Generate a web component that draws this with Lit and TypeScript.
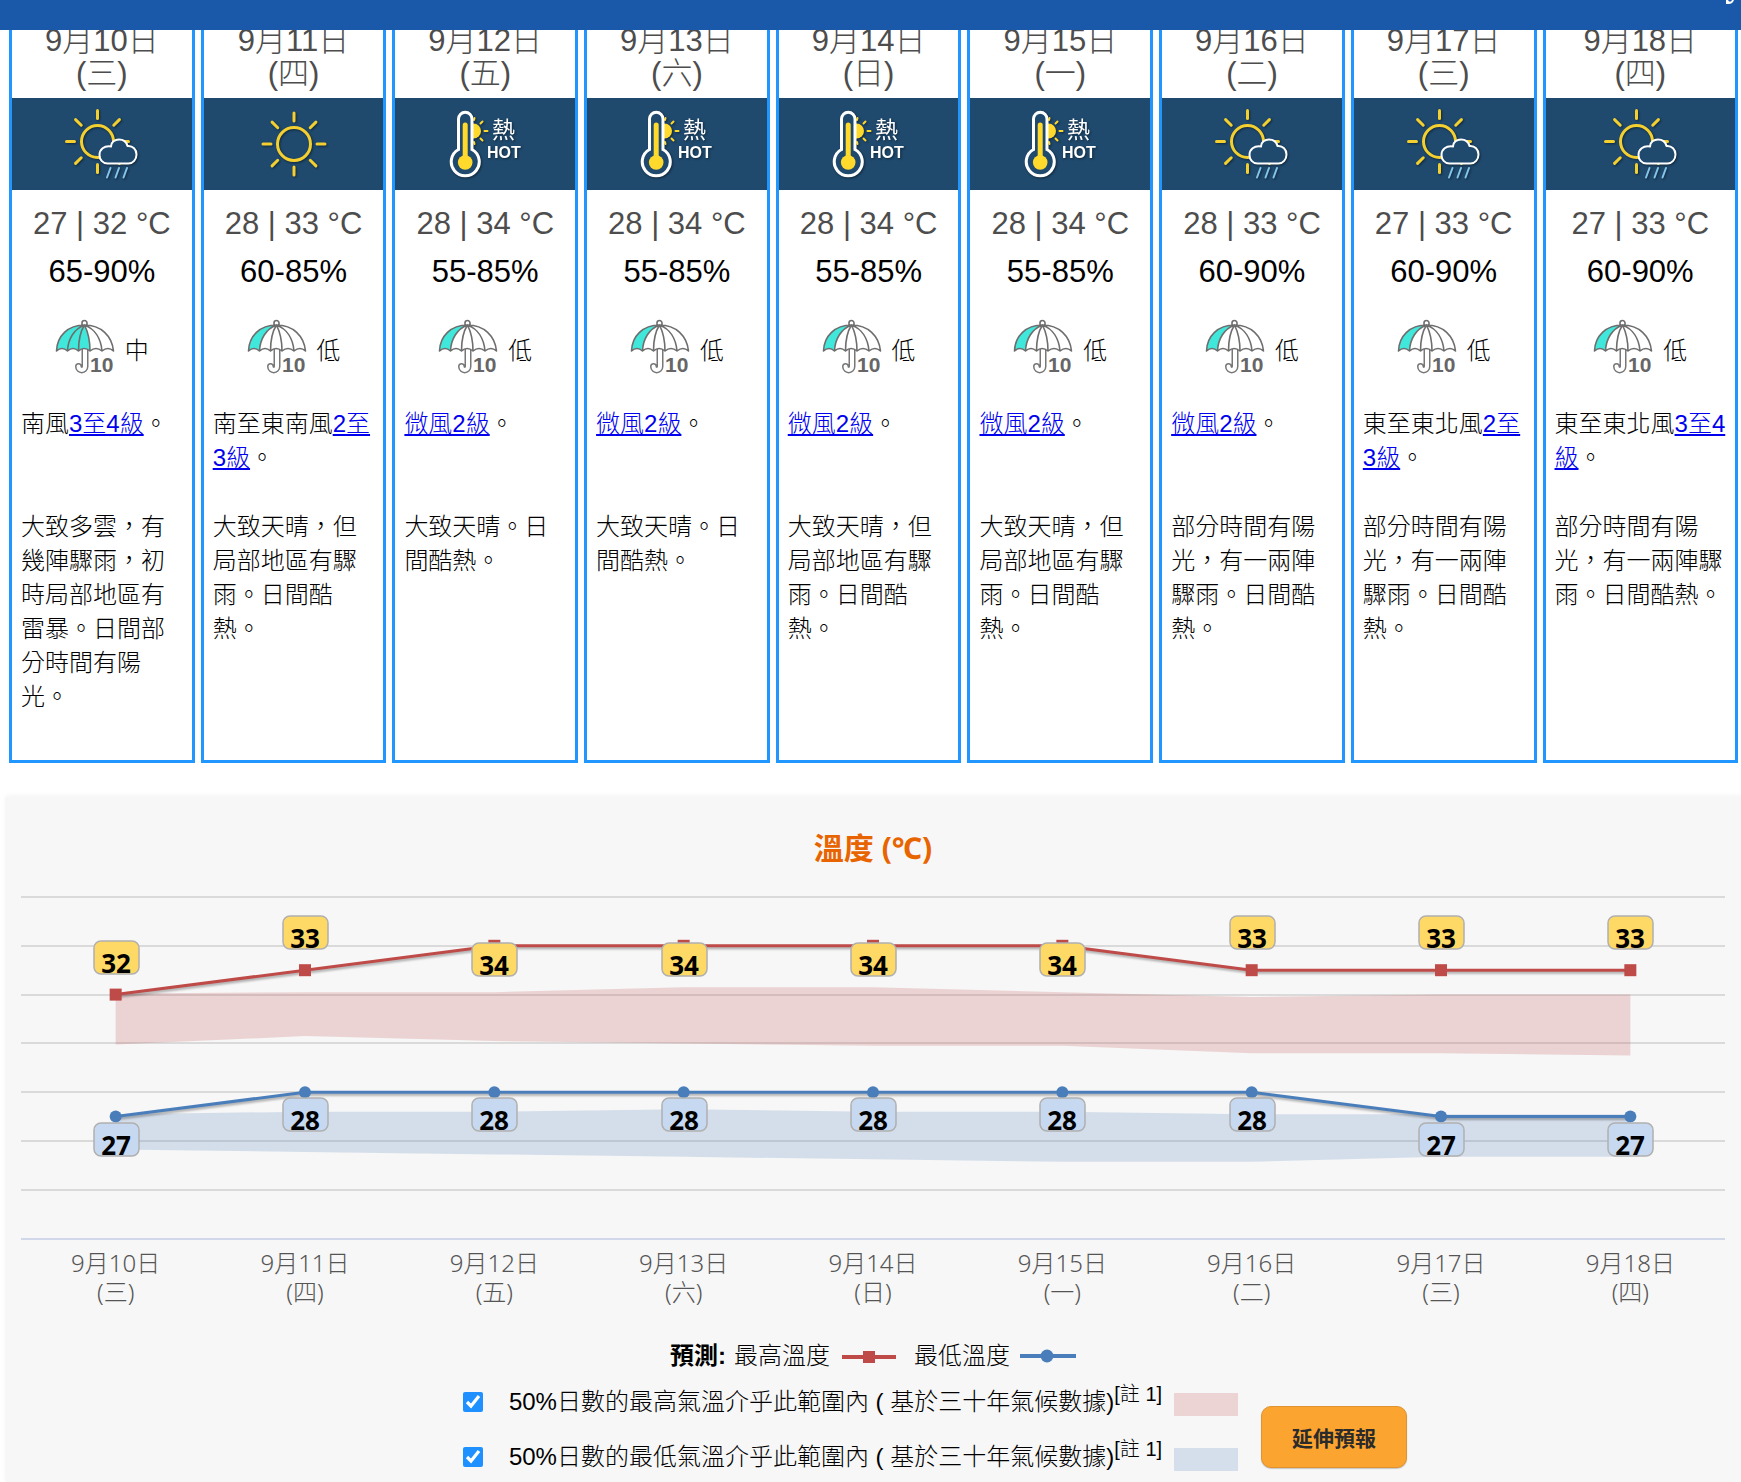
import { LitElement, html, svg, css } from "lit";
import { customElement, property, state } from "lit/decorators.js";

type Sky = "sun-rain" | "sunny" | "hot";
type LabelSpot = "above" | "over" | "below";

interface Day {
  date: string;
  weekday: string;
  sky: Sky;
  min: number;
  max: number;
  humidity: string;
  rain: "低" | "中";
  wind: string;
  force: string;
  text: string;
  maxRange: [number, number];
  minRange: [number, number];
}

const DAYS: Day[] = [
  { date: "9月10日", weekday: "(三)", sky: "sun-rain", min: 27, max: 32, humidity: "65-90%", rain: "中", wind: "南風", force: "3至4級", text: "大致多雲，有幾陣驟雨，初時局部地區有雷暴。日間部分時間有陽光。", maxRange: [29.95, 32.05], minRange: [25.65, 27.1] },
  { date: "9月11日", weekday: "(四)", sky: "sunny", min: 28, max: 33, humidity: "60-85%", rain: "低", wind: "南至東南風", force: "2至3級", text: "大致天晴，但局部地區有驟雨。日間酷熱。", maxRange: [30.3, 32.1], minRange: [25.55, 27.2] },
  { date: "9月12日", weekday: "(五)", sky: "hot", min: 28, max: 34, humidity: "55-85%", rain: "低", wind: "", force: "微風2級", text: "大致天晴。日間酷熱。", maxRange: [30.1, 32.1], minRange: [25.45, 27.2] },
  { date: "9月13日", weekday: "(六)", sky: "hot", min: 28, max: 34, humidity: "55-85%", rain: "低", wind: "", force: "微風2級", text: "大致天晴。日間酷熱。", maxRange: [30, 32.3], minRange: [25.35, 27.3] },
  { date: "9月14日", weekday: "(日)", sky: "hot", min: 28, max: 34, humidity: "55-85%", rain: "低", wind: "", force: "微風2級", text: "大致天晴，但局部地區有驟雨。日間酷熱。", maxRange: [29.9, 32.3], minRange: [25.25, 27.2] },
  { date: "9月15日", weekday: "(一)", sky: "hot", min: 28, max: 34, humidity: "55-85%", rain: "低", wind: "", force: "微風2級", text: "大致天晴，但局部地區有驟雨。日間酷熱。", maxRange: [29.9, 32.1], minRange: [25.15, 27.2] },
  { date: "9月16日", weekday: "(二)", sky: "sun-rain", min: 28, max: 33, humidity: "60-90%", rain: "低", wind: "", force: "微風2級", text: "部分時間有陽光，有一兩陣驟雨。日間酷熱。", maxRange: [29.6, 31.9], minRange: [25.15, 27.1] },
  { date: "9月17日", weekday: "(三)", sky: "sun-rain", min: 27, max: 33, humidity: "60-90%", rain: "低", wind: "東至東北風", force: "2至3級", text: "部分時間有陽光，有一兩陣驟雨。日間酷熱。", maxRange: [29.6, 32], minRange: [25.35, 27.1] },
  { date: "9月18日", weekday: "(四)", sky: "sun-rain", min: 27, max: 33, humidity: "60-90%", rain: "低", wind: "東至東北風", force: "3至4級", text: "部分時間有陽光，有一兩陣驟雨。日間酷熱。", maxRange: [29.5, 32], minRange: [25.35, 27.1] },
];

const sunRays = (cx: number, cy: number) =>
  [0, 45, 90, 135, 180, 225, 270, 315].map(
    (a) => svg`<line x1=${cx + 23} y1=${cy} x2=${cx + 31} y2=${cy} transform="rotate(${a} ${cx} ${cy})"/>`
  );

@customElement("sky-icon")
class SkyIcon extends LitElement {
  @property() kind: Sky = "sunny";

  static styles = css`
    :host { display: block; height: 72px; }
    svg { display: block; filter: drop-shadow(1px 1px 1px rgba(0, 0, 0, 0.45)); }
    .sun { fill: none; stroke: #f3d02f; stroke-width: 3; stroke-linecap: round; }
    .cloud { fill: #1f496d; stroke: #fff; stroke-width: 2; stroke-linejoin: round; }
    .drops { stroke: #84c6ea; stroke-width: 2; stroke-linecap: round; }
    .glass { fill: #1f496d; stroke: #fff; stroke-width: 3; }
    .warm { fill: #ffd92b; }
    .warm-ray { stroke: #ffd92b; stroke-width: 2; stroke-linecap: round; }
    .zh { fill: #fff; font: 23px "Noto Sans CJK TC", sans-serif; }
    .en { fill: #fff; font: bold 16px "Liberation Sans", Arial, sans-serif; }
  `;

  render() {
    if (this.kind === "sunny") {
      return html`<svg width="72" height="72" viewBox="0 0 72 72" aria-hidden="true">
        <g class="sun"><circle cx="36" cy="36" r="16.5"/>${sunRays(36, 36)}</g>
      </svg>`;
    }
    if (this.kind === "sun-rain") {
      return html`<svg width="73" height="72" viewBox="0 -1 73 72" aria-hidden="true">
        <g class="sun"><circle cx="32.5" cy="32.5" r="16"/>${sunRays(32.5, 32.5)}</g>
        <path class="cloud" d="M42.5 54.5 C37.5 54.5 34.5 50.5 34.5 46 C34.5 40.5 39 36.5 46 37.5 C46 33 50 30.5 54 30.5 C58.5 30.5 61.5 33 62.500 37 C68 36.5 71.5 40.5 71.5 45.5 C71.5 50.5 68 54.5 63.5 54.5 Z"/>
        <g class="drops"><line x1="45.5" y1="59" x2="42" y2="68.5"/><line x1="54" y1="59" x2="50.5" y2="68.5"/><line x1="62" y1="59" x2="58.5" y2="68.5"/></g>
      </svg>`;
    }
    return html`<svg width="73" height="72" viewBox="0 -2 73 72" role="img" aria-label="酷熱">
      <circle class="warm" cx="24.5" cy="21" r="7.5"/>
      <g class="warm-ray"><line x1="35.5" y1="21" x2="38.5" y2="21"/><line x1="31.5" y1="13.5" x2="33.5" y2="11.5"/><line x1="31.5" y1="28.5" x2="33.5" y2="30.5"/><line x1="25" y1="10" x2="25.5" y2="8"/><line x1="25" y1="32" x2="25.5" y2="34"/></g>
      <path class="glass" d="M9.5 9 A6.7 6.7 0 0 1 23 9 V39.5 A14 14 0 1 1 9.5 39.5 Z"/>
      <rect class="warm" x="13.7" y="12.5" width="5" height="38" rx="2.5"/>
      <circle class="warm" cx="16.2" cy="52.5" r="7.3"/>
      <text class="zh" x="43" y="28">熱</text>
      <text class="en" x="38" y="48">HOT</text>
    </svg>`;
  }
}

@customElement("umbrella-icon")
class UmbrellaIcon extends LitElement {
  @property({ type: Number }) filled = 1;

  static styles = css`
    :host { display: block; width: 58px; height: 54px; }
    svg { display: block; overflow: visible; }
    .cloth { fill: #fff; }
    .tint { fill: #40e8dc; }
    .rib { fill: none; stroke: #6e6e6e; stroke-width: 1.6; stroke-linejoin: round; }
    .outer { fill: none; stroke: #777; stroke-width: 7; stroke-linecap: round; }
    .inner { fill: none; stroke: #fff; stroke-width: 4; stroke-linecap: round; }
    .num { fill: #666; stroke: #fff; stroke-width: 3; paint-order: stroke; font: bold 21px "Liberation Sans", Arial, sans-serif; }
  `;

  render() {
    const tint =
      this.filled > 1
        ? svg`<path class="tint" d="M0.5 31 C1 16 12 5 28.5 5 C32 12 34 22 34 31 Q28 26 22.5 31 Q17 26 11.5 31 Q6 26 0.5 31 Z"/>`
        : svg`<path class="tint" d="M0.5 31 C1 16 12 5 28.5 5 C18 9 12 19 11.5 31 Q6 26 0.5 31 Z"/>`;
    return html`<svg width="58" height="54" viewBox="-1 -1 58 54" aria-hidden="true">
      <path class="outer" d="M29 28 V46.5 C29 51 22.5 51 22.5 46.5"/>
      <path class="inner" d="M29 28 V46.5 C29 51 22.5 51 22.5 46.5"/>
      <path class="cloth" d="M0.5 31 C1 16 12 5 28.5 5 C45 5 56 16 57.5 31 Q52 26 46 31 Q40 26 34 31 Q28 26 22.5 31 Q17 26 11.5 31 Q6 26 0.5 31 Z"/>
      ${tint}
      <path class="rib" d="M26 5 V3 A2.5 2.5 0 0 1 31 3 V5 M0.5 31 C1 16 12 5 28.5 5 C45 5 56 16 57.5 31 Q52 26 46 31 Q40 26 34 31 Q28 26 22.5 31 Q17 26 11.5 31 Q6 26 0.5 31 Z M28.5 5 C18 9 12 19 11.5 31 M28.5 5 C24 12 22.5 22 22.5 31 M28.5 5 C32 12 34 22 34 31 M28.5 5 C39 9 45 19 46 31"/>
      <text class="num" x="34" y="52">10</text>
    </svg>`;
  }
}

@customElement("day-card")
class DayCard extends LitElement {
  @property({ attribute: false }) day!: Day;

  static styles = css`
    :host { display: flex; flex-direction: column; min-width: 0; padding: 10px 0 46px; border: 3px solid #2196ff; background: #fff; }
    .date, .reading { text-align: center; font-size: 31px; color: #4d4d4d; }
    .date { margin: 0; padding-bottom: 8px; line-height: 33px; font-weight: 300; }
    .date span { display: block; }
    .sky { display: flex; justify-content: center; align-items: center; height: 92px; background: #1f496d; margin-bottom: 10px; }
    .reading { line-height: 48px; white-space: nowrap; }
    .humidity { color: #000; }
    .rain { display: flex; justify-content: center; align-items: flex-end; gap: 12px; margin: 23px 0 34px; line-height: 44px; }
    .wind, .text { margin: 0; padding: 0 9px; line-height: 34px; }
    .wind { min-height: 103px; }
    a { color: #0000ee; }
  `;

  render() {
    const d = this.day;
    return html`
      <h2 class="date"><span>${d.date}</span><span>${d.weekday}</span></h2>
      <div class="sky"><sky-icon .kind=${d.sky}></sky-icon></div>
      <div class="reading">${d.min} | ${d.max} °C</div>
      <div class="reading humidity">${d.humidity}</div>
      <div class="rain"><umbrella-icon .filled=${d.rain === "中" ? 3 : 1}></umbrella-icon><span>${d.rain}</span></div>
      <p class="wind">${d.wind}<a href="#wind">${d.force}</a>。</p>
      <p class="text">${d.text}</p>
    `;
  }
}

const TOP = 29;
const DEGREE = 24.4;
const AXIS = 371;
const y = (t: number) => TOP + (36 - t) * DEGREE;
const LABEL_TOP: Record<LabelSpot, number> = { above: -54, over: -3, below: 6 };

@customElement("temperature-chart")
class TemperatureChart extends LitElement {
  @property({ type: Boolean }) showMax = true;
  @property({ type: Boolean }) showMin = true;
  @state() private width = 1704;
  private observer?: ResizeObserver;

  static styles = css`
    :host { display: block; }
    svg { display: block; width: 100%; height: 440px; overflow: visible; }
    .grid { stroke: #dadada; stroke-width: 2; }
    .axis { stroke: #d0d8ea; stroke-width: 2; }
    .band-max { fill: rgba(192, 72, 72, 0.2); }
    .band-min { fill: rgba(74, 126, 187, 0.2); }
    .line { fill: none; stroke-width: 3; stroke-linejoin: round; filter: drop-shadow(1px 2px 1px rgba(0, 0, 0, 0.3)); }
    .line-max { stroke: #be4b48; }
    .line-min { stroke: #4a7ebb; }
    .dot-max { fill: #be4b48; }
    .dot-min { fill: #4a7ebb; }
    .tag { stroke: #b0b0b0; stroke-width: 1.5; }
    .tag-max { fill: #ffd966; }
    .tag-min { fill: #c6d9f1; }
    text { text-anchor: middle; }
    .value { font: bold 26px "Noto Sans", sans-serif; }
    .day { fill: #555; font: 300 24px "Noto Sans", "Noto Sans CJK TC", sans-serif; }
  `;

  connectedCallback() {
    super.connectedCallback();
    this.observer = new ResizeObserver(() => this.measure());
    this.observer.observe(this);
  }

  disconnectedCallback() {
    this.observer?.disconnect();
    super.disconnectedCallback();
  }

  private measure() {
    const w = this.clientWidth;
    if (w) this.width = w;
  }

  private x(i: number) {
    return ((i + 0.5) * this.width) / DAYS.length;
  }

  private band(key: "maxRange" | "minRange") {
    const upper = DAYS.map((d, i) => `${this.x(i)},${y(d[key][1])}`);
    const lower = DAYS.map((d, i) => `${this.x(i)},${y(d[key][0])}`).reverse();
    return [...upper, ...lower].join(" ");
  }

  private tag(i: number, value: number, spot: LabelSpot, kind: string) {
    const top = Math.round(y(value) + LABEL_TOP[spot]);
    const cx = Math.round(this.x(i));
    return svg`<rect class="tag ${kind}" x=${cx - 22} y=${top} width="45" height="33" rx="7"/>
      <text class="value" x=${cx} y=${top + 32}>${value}</text>`;
  }

  render() {
    const points = (key: "max" | "min") => DAYS.map((d, i) => `${this.x(i)},${y(d[key])}`).join(" ");
    return html`<svg role="img" aria-label="溫度">
      ${[36, 34, 32, 30, 28, 26, 24].map((t) => svg`<line class="grid" x1="0" x2=${this.width} y1=${Math.round(y(t))} y2=${Math.round(y(t))}/>`)}
      <line class="axis" x1="0" x2=${this.width} y1=${AXIS} y2=${AXIS}/>
      ${this.showMax ? svg`<polygon class="band-max" points=${this.band("maxRange")}/>` : ""}
      ${this.showMin ? svg`<polygon class="band-min" points=${this.band("minRange")}/>` : ""}
      <polyline class="line line-max" points=${points("max")}/>
      <polyline class="line line-min" points=${points("min")}/>
      ${DAYS.map((d, i) => svg`
        <rect class="dot-max" x=${this.x(i) - 6} y=${y(d.max) - 6} width="12" height="12"/>
        <circle class="dot-min" cx=${this.x(i)} cy=${y(d.min)} r="6"/>
        ${this.tag(i, d.max, d.max > 33 ? "over" : "above", "tag-max")}
        ${this.tag(i, d.min, "below", "tag-min")}
        <text class="day" x=${this.x(i)} y="404">${d.date}</text>
        <text class="day" x=${this.x(i)} y="433">${d.weekday}</text>`)}
    </svg>`;
  }
}

@customElement("app-root")
class AppRoot extends LitElement {
  @state() private showMax = true;
  @state() private showMin = true;

  static styles = css`
    :host { display: block; background: #fff; color: #000; font: 300 24px "Liberation Sans", Arial, "Noto Sans CJK TC", sans-serif; text-spacing-trim: space-all; overflow: hidden; }
    .bar { position: relative; z-index: 1; display: flex; justify-content: flex-end; height: 30px; padding-right: 6px; background: #1a58aa; }
    .mark { display: block; }
    .days { display: grid; grid-template-columns: repeat(8, 19fr) 20fr; gap: 6px; margin-top: -19px; padding: 0 3px 0 9px; }
    .panel { margin: 34px 0 0 5px; padding: 31px 16px 3px; background: #f7f7f7; box-shadow: 1px -1px 5px rgba(0, 0, 0, 0.06); }
    .title { margin: 0; text-align: center; color: #e86400; font: bold 30px/40px "Noto Sans", "Noto Sans CJK TC", sans-serif; }
    .series { display: flex; justify-content: center; align-items: center; margin-top: 31px; line-height: 34px; }
    .series strong { margin-right: 8px; font-weight: 700; }
    .series svg { margin: 0 18px 0 12px; }
    .series svg:last-child { margin: 0 0 0 10px; }
    .swatch-max { stroke: #be4b48; fill: #be4b48; stroke-width: 4; }
    .swatch-min { stroke: #4a7ebb; fill: #4a7ebb; stroke-width: 4; }
    .dot { stroke: none; }
    .controls { display: flex; justify-content: center; align-items: center; gap: 23px; margin-top: 7px; padding-left: 124px; }
    .ranges { display: grid; gap: 11px; }
    .range { display: flex; align-items: center; height: 44px; line-height: 34px; white-space: nowrap; }
    .range input { width: 20px; height: 20px; margin: 0 26px 0 0; accent-color: #1e90ff; }
    .range sup { font-size: 20px; line-height: 18px; }
    .fill { width: 64px; height: 23px; margin: 5px 0 0 12px; }
    .fill-max { background: #ecd4d4; }
    .fill-min { background: #d5dfeb; }
    .extend { width: 146px; height: 62px; margin-top: 14px; padding: 0; border: 1px solid #e0932f; border-radius: 10px; background: #fba430; color: #2b2b2b; font: bold 21px "Noto Sans CJK TC", sans-serif; box-shadow: 0 1px 1px rgba(0, 0, 0, 0.2); cursor: pointer; }
  `;

  render() {
    return html`
      <header class="bar">
        <svg class="mark" width="9" height="4" viewBox="0 0 9 4" aria-hidden="true"><path fill="#fff" d="M0 0 H2 L3 1.5 H5 L6 0 H8 L7 2 Q5.500 4 3 4 H0 Z"/></svg>
      </header>
      <main>
        <section class="days">${DAYS.map((d) => html`<day-card .day=${d}></day-card>`)}</section>
        <section class="panel">
          <h2 class="title">溫度 (℃)</h2>
          <temperature-chart .showMax=${this.showMax} .showMin=${this.showMin}></temperature-chart>
          <div class="series">
            <strong>預測:</strong>
            <span>最高溫度</span>
            <svg width="54" height="14" viewBox="0 0 54 14" aria-hidden="true"><line class="swatch-max" x1="0" x2="54" y1="8" y2="8"/><rect class="swatch-max dot" x="21" y="2" width="12" height="12"/></svg>
            <span>最低溫度</span>
            <svg width="56" height="14" viewBox="0 0 56 14" aria-hidden="true"><line class="swatch-min" x1="0" x2="56" y1="7" y2="7"/><circle class="swatch-min dot" cx="27" cy="7" r="6.5"/></svg>
          </div>
          <div class="controls">
            <div class="ranges">
              <div class="range">
                <input id="max" type="checkbox" .checked=${this.showMax} @change=${(e: Event) => (this.showMax = (e.target as HTMLInputElement).checked)}>
                <label for="max">50%日數的最高氣溫介乎此範圍內 ( 基於三十年氣候數據)<sup>[註 1]</sup></label>
                <span class="fill fill-max"></span>
              </div>
              <div class="range">
                <input id="min" type="checkbox" .checked=${this.showMin} @change=${(e: Event) => (this.showMin = (e.target as HTMLInputElement).checked)}>
                <label for="min">50%日數的最低氣溫介乎此範圍內 ( 基於三十年氣候數據)<sup>[註 1]</sup></label>
                <span class="fill fill-min"></span>
              </div>
            </div>
            <button class="extend" type="button">延伸預報</button>
          </div>
        </section>
      </main>
    `;
  }
}
